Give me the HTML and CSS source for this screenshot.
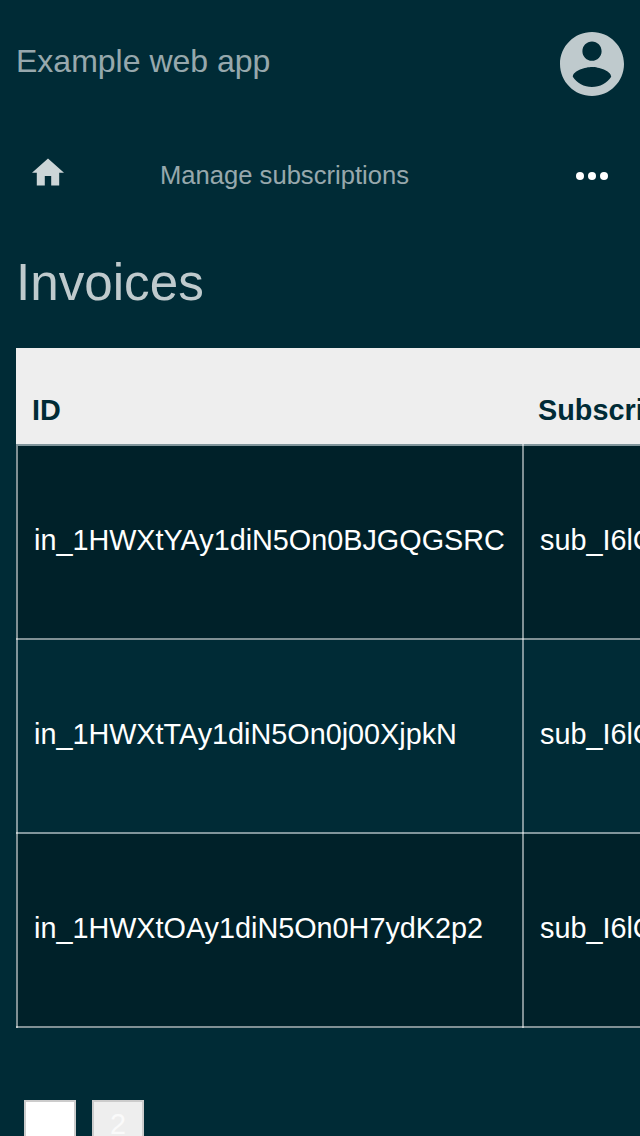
FILE: index.html
```html
<!DOCTYPE html>
<html lang="en">
<head>
<meta charset="utf-8">
<title>Invoices</title>
<link rel="stylesheet" href="styles.css">
</head>
<body>
<header class="topbar">
  <span class="brand">Example web app</span>
  <svg class="avatar" viewBox="2 2 20 20"><path fill-rule="evenodd" d="M12 2C6.48 2 2 6.48 2 12s4.48 10 10 10 10-4.48 10-10S17.52 2 12 2zm0 3c1.66 0 3 1.34 3 3s-1.34 3-3 3-3-1.34-3-3 1.34-3 3-3zm0 14.2c-2.5 0-4.71-1.28-6-3.22.03-1.99 4-3.08 6-3.08 1.99 0 5.97 1.09 6 3.08-1.29 1.94-3.5 3.22-6 3.22z"/></svg>
</header>
<nav class="nav">
  <svg class="home" viewBox="2 2.75 20 17.5"><path d="M10 20v-6h4v6h5v-8h3L12 3 2 12h3v8z"/></svg>
  <span class="crumb">Manage subscriptions</span>
  <svg class="more" viewBox="0 0 32 8"><circle cx="4" cy="4" r="4"/><circle cx="16" cy="4" r="4"/><circle cx="28" cy="4" r="4"/></svg>
</nav>
<main class="content">
  <h1 class="title">Invoices</h1>
  <div class="table">
    <div class="head"><div class="th">ID</div><div class="th">Subscription</div></div>
    <div class="rule"></div>
    <div class="row odd"><div class="td">in_1HWXtYAy1diN5On0BJGQGSRC</div><div class="td">sub_I6lC</div></div>
    <div class="row"><div class="td">in_1HWXtTAy1diN5On0j00XjpkN</div><div class="td">sub_I6lC</div></div>
    <div class="row odd"><div class="td">in_1HWXtOAy1diN5On0H7ydK2p2</div><div class="td">sub_I6lC</div></div>
  </div>
  <div class="pages"><span class="page current">1</span><span class="page">2</span></div>
</main>
</body>
</html>
```
FILE: styles.css
```css
* { box-sizing: border-box; }
html, body { height: 1136px; overflow: hidden; }
body {
  margin: 0;
  background: #002b36;
  color: #fff;
  font: 28.8px/40px "Liberation Sans", Arial, sans-serif;
}
.topbar {
  display: flex;
  justify-content: space-between;
  height: 128px;
  padding: 32px 16px;
}
.brand { font-size: 32px; line-height: 58px; color: rgba(255, 255, 255, .6); }
.avatar { width: 64px; height: 64px; fill: #bfcacd; }
.nav {
  display: flex;
  align-items: center;
  height: 96px;
  padding: 0 32px;
}
.home { width: 32px; height: 28px; margin-top: -8px; fill: #ccd5d7; }
.crumb { flex: 1; margin: -2px 0 0 96px; font-size: 25.6px; color: rgba(255, 255, 255, .6); }
.more { width: 32px; height: 8px; fill: #fff; }
.content { padding-left: 16px; }
.title {
  height: 124px;
  margin: 0;
  padding-top: 29px;
  font-size: 51.2px;
  font-weight: 400;
  line-height: 60px;
  color: #bfcacd;
}
.table { width: 624px; overflow: hidden; }
.head, .row { display: grid; grid-template-columns: 506px 506px; }
.head { width: 1012px; height: 96px; background: #eee; color: #002b36; font-weight: 700; }
.th { padding: 42px 16px 0; }
.rule {
  height: 2px;
  background: linear-gradient(90deg, transparent 506px, rgba(255, 255, 255, .5) 506px 508px, transparent 508px), #80959b;
}
.row { height: 194px; }
.td {
  padding: 74px 18px 0;
  white-space: nowrap;
  letter-spacing: -.01px;
  background:
    linear-gradient(rgba(255, 255, 255, .5), rgba(255, 255, 255, .5)) left / 2px 100% no-repeat,
    linear-gradient(rgba(255, 255, 255, .5), rgba(255, 255, 255, .5)) bottom / 100% 2px no-repeat;
}
.odd .td { background-color: #002129; }
.pages { display: flex; gap: 16px; padding: 72px 8px 0; }
.page {
  width: 52px;
  height: 52px;
  border: 2px solid #ccc;
  background: #eee;
  color: #fafafa;
  line-height: 44px;
  text-align: center;
}
.current { background: #fff; color: #fff; }
```
